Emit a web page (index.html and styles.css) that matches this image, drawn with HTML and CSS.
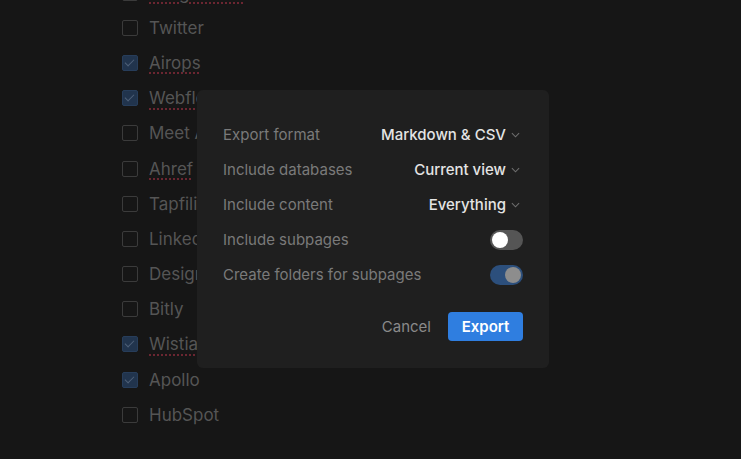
FILE: index.html
```html
<!DOCTYPE html>
<html lang="en">
<head>
    <meta charset="UTF-8">
    <meta name="viewport" content="width=device-width, initial-scale=1.0">
    <title>Export</title>
    <link rel="stylesheet" href="styles.css">
</head>
<body>

    <!-- Background list of integrations -->
    <ul class="tool-list">
        <li><span class="box"></span><span class="name typo">Integrations</span></li>
        <li><span class="box"></span><span class="name">Twitter</span></li>
        <li><span class="box checked"></span><span class="name typo">Airops</span></li>
        <li><span class="box checked"></span><span class="name typo">Webflow</span></li>
        <li><span class="box"></span><span class="name">Meet Alfred</span></li>
        <li><span class="box"></span><span class="name typo">Ahref</span></li>
        <li><span class="box"></span><span class="name">Tapfiliate</span></li>
        <li><span class="box"></span><span class="name">LinkedIn</span></li>
        <li><span class="box"></span><span class="name">Designrr</span></li>
        <li><span class="box"></span><span class="name">Bitly</span></li>
        <li><span class="box checked"></span><span class="name typo">Wistia</span></li>
        <li><span class="box checked"></span><span class="name">Apollo</span></li>
        <li><span class="box"></span><span class="name">HubSpot</span></li>
    </ul>

    <!-- Export dialog -->
    <div class="dialog">
        <div class="row">
            <span class="label">Export format</span>
            <span class="value">Markdown &amp; CSV<svg class="chev" viewBox="0 0 10 6"><path d="M1 1l4 4 4-4"/></svg></span>
        </div>
        <div class="row">
            <span class="label">Include databases</span>
            <span class="value">Current view<svg class="chev" viewBox="0 0 10 6"><path d="M1 1l4 4 4-4"/></svg></span>
        </div>
        <div class="row">
            <span class="label">Include content</span>
            <span class="value">Everything<svg class="chev" viewBox="0 0 10 6"><path d="M1 1l4 4 4-4"/></svg></span>
        </div>
        <div class="row">
            <span class="label">Include subpages</span>
            <span class="toggle"><span class="knob"></span></span>
        </div>
        <div class="row">
            <span class="label">Create folders for subpages</span>
            <span class="toggle on"><span class="knob"></span></span>
        </div>
        <div class="actions">
            <button class="cancel">Cancel</button>
            <button class="export">Export</button>
        </div>
    </div>

</body>
</html>
```

FILE: styles.css
```css
body {
    margin: 0;
    height: 459px;
    overflow: hidden;
    background-color: #161616;
    font-family: Inter, "Noto Sans", sans-serif;
}
.tool-list {
    list-style: none;
    margin: -25px 0 0 122px;
    padding: 0;
}
.tool-list li {
    display: flex;
    align-items: center;
    height: 35.2px;
}
.box {
    width: 14px;
    height: 14px;
    border: 1.5px solid #3b3b3b;
    border-radius: 2px;
    margin-right: 11px;
    position: relative;
}
.box.checked {
    background-color: #21344d;
    border-color: #273d5a;
}
.box.checked::after {
    content: "";
    position: absolute;
    left: 4px;
    top: 1px;
    width: 4px;
    height: 8px;
    border: solid #4f6078;
    border-width: 0 1.5px 1.5px 0;
    transform: rotate(45deg);
}
.name {
    font-size: 17px;
    color: #555555;
}
.typo {
    text-decoration: underline dotted #6b2631;
    text-decoration-thickness: 2px;
    text-underline-offset: 4px;
}
.dialog {
    position: absolute;
    left: 197px;
    top: 90px;
    width: 352px;
    box-sizing: border-box;
    padding: 27px 26px 27px 26px;
    background-color: #1f1f1f;
    border-radius: 6px;
}
.row {
    display: flex;
    justify-content: space-between;
    align-items: center;
    height: 35px;
}
.label {
    font-size: 15px;
    color: #7a7a7a;
}
.value {
    display: flex;
    align-items: center;
    font-size: 15px;
    font-weight: 500;
    color: #e4e4e4;
    margin-right: 3px;
}
.chev {
    width: 9px;
    height: 6px;
    margin-left: 5px;
    fill: none;
    stroke: #6e6e6e;
    stroke-width: 1.2;
}
.toggle {
    width: 33px;
    height: 20px;
    border-radius: 10px;
    background-color: #555555;
    display: flex;
    align-items: center;
    padding: 0 2px;
    box-sizing: border-box;
}
.knob {
    width: 16px;
    height: 16px;
    border-radius: 50%;
    background-color: #ffffff;
}
.toggle.on {
    background-color: #2c4f7c;
    justify-content: flex-end;
}
.toggle.on .knob {
    background-color: #8d8d8d;
}
.actions {
    display: flex;
    justify-content: flex-end;
    align-items: center;
    gap: 17px;
    margin-top: 20px;
}
button {
    font-family: Inter, "Noto Sans", sans-serif;
    font-size: 15px;
    border: none;
    cursor: pointer;
    border-radius: 4px;
}
.cancel {
    background: none;
    color: #8a8a8a;
    padding: 0;
}
.export {
    background-color: #2f7ee0;
    color: #ffffff;
    font-weight: 600;
    width: 75px;
    height: 29px;
}
```
